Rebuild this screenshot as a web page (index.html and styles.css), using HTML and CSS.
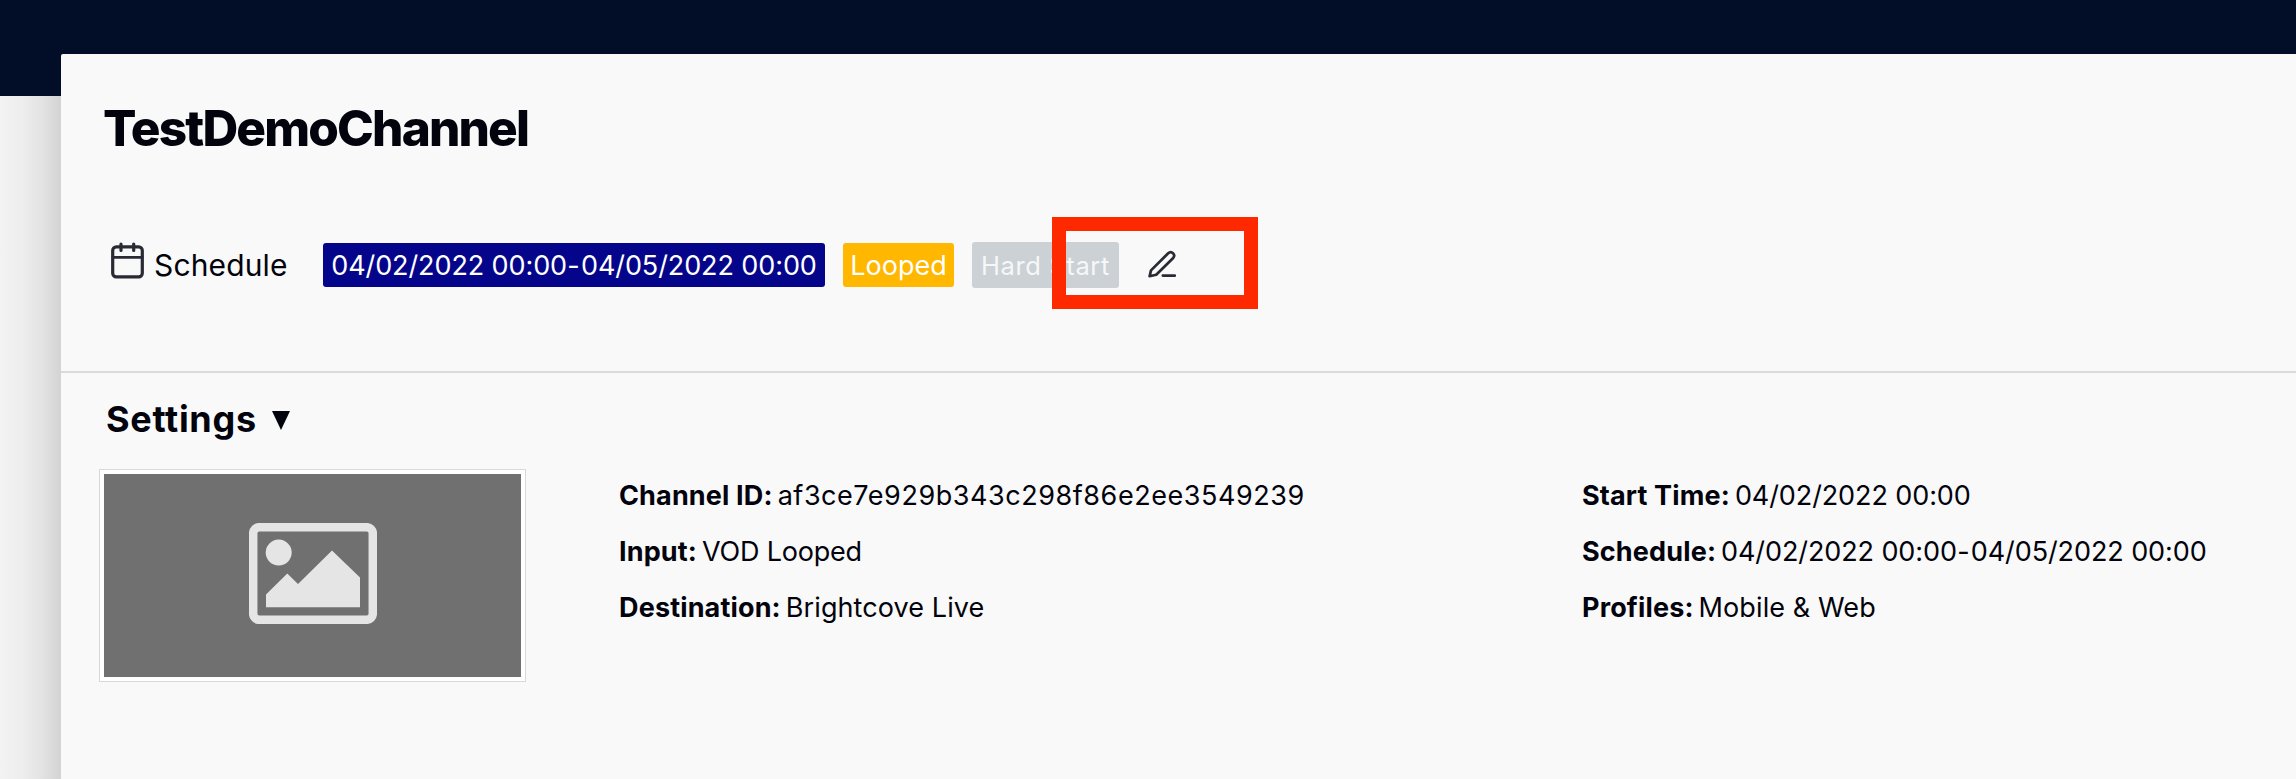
FILE: index.html
```html
<!DOCTYPE html>
<html lang="en">
<head>
<meta charset="utf-8">
<title>TestDemoChannel</title>
<link rel="stylesheet" href="styles.css">
</head>
<body>
<main class="panel">
  <header class="channel-head">
    <h1 class="channel-name">TestDemoChannel</h1>
    <div class="schedule">
      <svg class="calendar" viewBox="0 0 33 37" fill="none" stroke="#292a34" stroke-width="3.2" stroke-linecap="round">
        <rect x="1.7" y="4.8" width="29.6" height="30" rx="3.6"/>
        <path d="M2 15.3H31" stroke-width="2.8"/>
        <path d="M10 2V8.5M22.7 2V8.5"/>
      </svg>
      <span class="schedule-label">Schedule</span>
      <span class="tag tag-range"><span>04/02/2022 00:00</span><span class="dash">-</span><span>04/05/2022 00:00</span></span>
      <span class="tag tag-looped">Looped</span>
      <span class="tag tag-hard">Hard Start</span>
      <span class="edit">
        <svg class="pencil" viewBox="0 0 28 28" fill="none" stroke="#292a34" stroke-width="2.7" stroke-linecap="round" stroke-linejoin="round">
          <path d="M1.6 26.2L3 20.4L20.2 3.2C23.5 .2 28 4.5 25.2 8L8.2 24.8Z"/>
          <path d="M14.8 25.6H26.8"/>
        </svg>
      </span>
    </div>
  </header>
  <section class="settings">
    <h2 class="settings-title">Settings <svg class="caret" viewBox="0 0 18 19"><path d="M0 0H18L9 19Z" fill="#02030c"/></svg></h2>
    <div class="settings-body">
      <div class="thumb">
        <svg class="image-icon" viewBox="0 0 128 101">
          <rect x="4.2" y="4.2" width="119.6" height="92.6" rx="6" fill="none" stroke="#e5e5e5" stroke-width="8.5"/>
          <circle cx="29.7" cy="29.6" r="13" fill="#e5e5e5"/>
          <path d="M17 71.5L38.3 50.5L49 61L83 27.5L111 54.5V84.3H17Z" fill="#e5e5e5"/>
        </svg>
      </div>
      <dl class="details">
        <div class="row"><dt>Channel ID:</dt><dd class="hash">af3ce7e929b343c298f86e2ee3549239</dd></div>
        <div class="row"><dt>Input:</dt><dd class="tight">VOD Looped</dd></div>
        <div class="row"><dt>Destination:</dt><dd>Brightcove Live</dd></div>
      </dl>
      <dl class="details">
        <div class="row"><dt>Start Time:</dt><dd class="date">04/02/2022 00:00</dd></div>
        <div class="row"><dt>Schedule:</dt><dd class="date"><span>04/02/2022 00:00</span><span class="dash">-</span><span>04/05/2022 00:00</span></dd></div>
        <div class="row"><dt>Profiles:</dt><dd>Mobile &amp; Web</dd></div>
      </dl>
    </div>
  </section>
</main>
</body>
</html>
```

FILE: styles.css
```css
* { box-sizing: border-box; }
html { height: 100%; }
body {
  height: 779px;
  margin: 0;
  padding: 54px 0 0 61px;
  overflow: hidden;
  background: linear-gradient(#020e27 0 96px, transparent 0),
    linear-gradient(90deg, #f3f3f3 0, #ededed 23px, #e3e3e3 42px, #d3d3d3 61px);
  color: #02030c;
  font-family: Inter, "Liberation Sans", sans-serif;
}
.panel {
  height: 725px;
  background: #f9f9f9;
  border-radius: 2px 0 0 0;
}
.channel-head {
  height: 319px;
  padding: 44px 0 0 42px;
  border-bottom: 2px solid #dadada;
}
.channel-name {
  margin: 0;
  font-size: 49.5px;
  line-height: 60px;
  font-weight: 800;
  letter-spacing: -1.85px;
}
.schedule {
  display: flex;
  align-items: center;
  height: 46px;
  margin-top: 84px;
  padding-left: 8px;
  white-space: nowrap;
}
.calendar { width: 33px; height: 37px; margin-bottom: 10px; }
.schedule-label { width: 169px; margin-left: 10px; font-size: 30px; letter-spacing: .14px; }
.tag {
  display: flex;
  align-items: center;
  justify-content: center;
  height: 44px;
  border-radius: 3px;
  font-size: 27px;
  color: #fff;
}
.tag-range { width: 502px; background: #05058b; letter-spacing: -.1px; }
.tag-looped { width: 111px; margin-left: 18px; background: #ffb700; }
.tag-hard {
  width: 147px;
  height: 46px;
  margin-left: 18px;
  background: #ccd1d5;
  color: #f6f7f8;
  font-size: 25.5px;
  letter-spacing: .62px;
}
.dash { display: inline-block; width: 14px; text-align: center; text-indent: -1px; }
.edit {
  position: relative;
  z-index: 1;
  display: flex;
  width: 206px;
  height: 92px;
  margin: -27px 0 -23px -67px;
  padding: 19px 0 0 82px;
  border: 14px solid #ff2900;
}
.pencil { width: 28px; height: 28px; }
.settings { padding: 22px 0 0 38px; }
.settings-title {
  display: flex;
  align-items: center;
  height: 48px;
  margin: 0 0 26px;
  padding-left: 7px;
  font-size: 36px;
  font-weight: 700;
  letter-spacing: .7px;
}
.caret { width: 18px; height: 19px; margin: 2px 0 0 15px; }
.settings-body { display: flex; align-items: flex-start; }
.thumb {
  display: flex;
  justify-content: center;
  width: 427px;
  height: 213px;
  padding-top: 53px;
  border: 1px solid #d9d9d9;
  background: linear-gradient(#707070, #707070) 4px 4px / 417px 203px no-repeat #fff;
}
.image-icon { width: 128px; height: 101px; margin-left: 1px; }
.details { width: 963px; margin: -1px 0 0 93px; font-size: 27px; line-height: 56px; }
.details + .details { width: auto; margin-left: 0; }
.row { display: flex; white-space: nowrap; }
.row dt { font-weight: 700; letter-spacing: .15px; }
.row dd { margin: 0 0 0 5px; letter-spacing: .1px; }
.row .hash { letter-spacing: .55px; }
.row .tight { letter-spacing: -.2px; }
.row .date { letter-spacing: -.1px; }
```
